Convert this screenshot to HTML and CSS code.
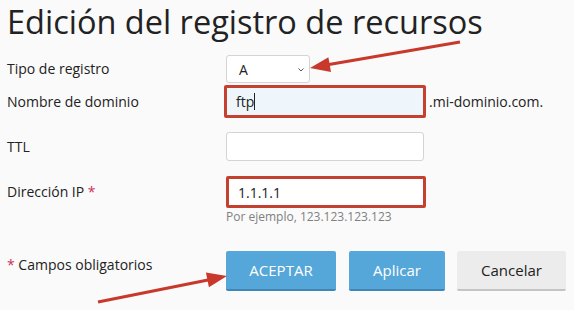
FILE: index.html
```html
<!DOCTYPE html>
<html lang="es">
    <head>
        <meta charset="UTF-8">
        <meta name="viewport" content="width=device-width, initial-scale=1.0">
        <title>Edición del registro de recursos</title>
        <link rel="stylesheet" href="styles.css">
    </head>
    <body>
        <div class="page">
            <h1>Edición del registro de recursos</h1>

            <div class="row row-type">
                <span class="label">Tipo de registro</span>
                <div class="select">
                    <span>A</span>
                    <svg class="chevron" width="6" height="4" viewBox="0 0 6 4">
                        <path d="M0.5 0.5 L3 3 L5.5 0.5" fill="none" stroke="#555" stroke-width="1"/>
                    </svg>
                </div>
            </div>

            <div class="row row-domain">
                <span class="label">Nombre de dominio</span>
                <div class="input marked focused">ftp<span class="caret"></span></div>
                <span class="suffix">.mi-dominio.com.</span>
            </div>

            <div class="row row-ttl">
                <span class="label">TTL</span>
                <div class="input"></div>
            </div>

            <div class="row row-ip">
                <span class="label">Dirección IP <span class="req">*</span></span>
                <div class="input marked">1.1.1.1</div>
            </div>

            <div class="hint">Por ejemplo, 123.123.123.123</div>

            <div class="row row-buttons">
                <span class="label"><span class="req">*</span> Campos obligatorios</span>
                <div class="buttons">
                    <button class="btn btn-primary btn-ok">ACEPTAR</button>
                    <button class="btn btn-primary btn-apply">Aplicar</button>
                    <button class="btn btn-cancel">Cancelar</button>
                </div>
            </div>

            <!-- flechas de anotación -->
            <svg class="arrows" width="574" height="310">
                <line x1="460" y1="42" x2="329" y2="64.6" />
                <polygon points="310,68 328.4,57.2 331,72" />
                <line x1="98" y1="302" x2="208" y2="280" />
                <polygon points="227,276 208.9,287.3 205.9,272.6" />
            </svg>
        </div>
    </body>
</html>
```

FILE: styles.css
```css
body {
    margin: 0;
    background: #fafafa;
    font-family: "Open Sans", "Liberation Sans", sans-serif;
    color: #222;
}

.page {
    position: relative;
    width: 574px;
    height: 310px;
    padding: 0 7px;
    box-sizing: border-box;
    overflow: hidden;
}

h1 {
    margin: 0;
    font-size: 32.5px;
    font-weight: 400;
    line-height: 44px;
    color: #222;
}

.row {
    display: flex;
    align-items: center;
}

.label {
    width: 219px;
    flex: none;
    font-size: 14px;
    line-height: 20px;
    color: #222;
}

.req {
    color: #c8325a;
}

.row-type {
    margin-top: 11px;
}

.row-domain {
    margin-top: 2px;
}

.row-ttl {
    margin-top: 14px;
}

.row-ip {
    margin-top: 15px;
}

.select {
    display: flex;
    align-items: center;
    justify-content: space-between;
    width: 84px;
    height: 28px;
    padding: 0 5px 0 12px;
    box-sizing: border-box;
    background: #fff;
    border: 1px solid #d4d4d4;
    border-radius: 3px;
    font-size: 14px;
}

.chevron {
    margin-top: 1px;
}

.input {
    display: flex;
    align-items: center;
    width: 198px;
    height: 29px;
    padding: 0 9px;
    box-sizing: border-box;
    background: #fff;
    border: 1px solid #d4d4d4;
    border-radius: 3px;
    font-size: 14px;
    color: #222;
}

.input.marked {
    width: 200px;
    height: 33px;
    border: 3px solid #c4402f;
    border-radius: 2px;
}

.row-ip .input.marked {
    height: 32px;
}

.row-domain .input {
    margin-left: -2px;
    width: 202px;
}

.focused {
    background: #eef6fc;
}

.caret {
    display: inline-block;
    width: 1px;
    height: 17px;
    background: #222;
}

.suffix {
    margin-left: 3px;
    font-size: 14px;
}

.hint {
    margin-left: 219px;
    font-size: 12px;
    line-height: 18px;
    color: #808080;
}

.row-buttons {
    margin-top: 25px;
    align-items: flex-start;
}

.row-buttons .label {
    padding-top: 4px;
}

.buttons {
    display: flex;
    gap: 12px;
}

.btn {
    height: 40px;
    padding: 0;
    border: none;
    border-bottom: 2px solid #c4c4c4;
    border-radius: 2px;
    background: #ececec;
    font-family: "Open Sans", "Liberation Sans", sans-serif;
    font-size: 15px;
    font-weight: 400;
    color: #222;
}

.btn-primary {
    background: #55a7da;
    border-bottom-color: #3e86b5;
    color: #fff;
}

.btn-ok {
    width: 110px;
    margin-right: 1px;
}

.btn-apply {
    width: 96px;
}

.btn-cancel {
    width: 109px;
}

.arrows {
    position: absolute;
    left: 0;
    top: 0;
}

.arrows line {
    stroke: #c8392b;
    stroke-width: 3;
}

.arrows polygon {
    fill: #c8392b;
}
```
